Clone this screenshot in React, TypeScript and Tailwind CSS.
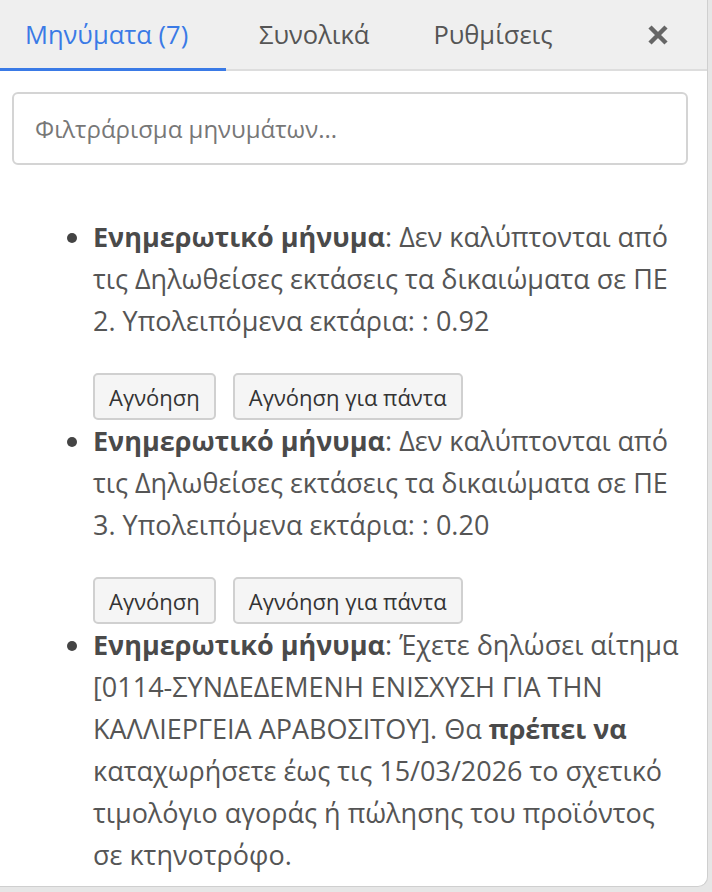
import React from 'react';

const font = { fontFamily: '"Open Sans", "Noto Sans", sans-serif' };

interface Message {
  id: number;
  body: React.ReactNode;
  actions: boolean;
}

const messages: Message[] = [
  {
    id: 1,
    actions: true,
    body: (
      <>
        <b className="font-bold text-[#4a4a4a]">Ενημερωτικό μήνυμα</b>: Δεν καλύπτονται από τις Δηλωθείσες εκτάσεις τα
        δικαιώματα σε ΠΕ 2. Υπολειπόμενα εκτάρια: : 0.92
      </>
    ),
  },
  {
    id: 2,
    actions: true,
    body: (
      <>
        <b className="font-bold text-[#4a4a4a]">Ενημερωτικό μήνυμα</b>: Δεν καλύπτονται από τις Δηλωθείσες εκτάσεις τα
        δικαιώματα σε ΠΕ 3. Υπολειπόμενα εκτάρια: : 0.20
      </>
    ),
  },
  {
    id: 3,
    actions: false,
    body: (
      <>
        <b className="font-bold text-[#4a4a4a]">Ενημερωτικό μήνυμα</b>: Έχετε δηλώσει αίτημα [0114-ΣΥΝΔΕΔΕΜΕΝΗ ΕΝΙΣΧΥΣΗ
        ΓΙΑ ΤΗΝ ΚΑΛΛΙΕΡΓΕΙΑ ΑΡΑΒΟΣΙΤΟΥ]. Θα <b className="font-bold text-[#4a4a4a]">πρέπει να</b> καταχωρήσετε έως
        τις 15/03/2026 το σχετικό τιμολόγιο αγοράς ή πώλησης του προϊόντος σε κτηνοτρόφο.
      </>
    ),
  },
];

export default function App() {
  return (
    <div className="w-[712px] h-[892px] bg-[#e6e6e6] overflow-hidden" style={font}>
      <div className="w-[708px] h-[887px] bg-white border-r border-b border-[#cfcfcf] rounded-br-[10px] overflow-hidden flex flex-col">
        {/* Tabs */}
        <div className="flex items-stretch h-[71px] bg-[#efefef] border-b-2 border-[#dddddd] text-[25.5px]">
          <div className="w-[226px] pl-[25px] flex items-center text-[#3a7ae6] border-b-[3px] border-[#3a7ae6] -mb-[2px]">
            Μηνύματα (7)
          </div>
          <div className="pl-[33px] pr-[32px] flex items-center text-[#555]">Συνολικά</div>
          <div className="pl-[32px] flex items-center text-[#555]">Ρυθμίσεις</div>
          <div className="flex-1 flex items-center justify-end pr-[38px]">
            <svg width="22" height="22" viewBox="0 0 22 22">
              <path d="M3 3 L19 19 M19 3 L3 19" stroke="#666" strokeWidth="4.5" />
            </svg>
          </div>
        </div>

        {/* Filter */}
        <div className="pl-[12px] pr-[19px] pt-[21px]">
          <input
            type="text"
            placeholder="Φιλτράρισμα μηνυμάτων..."
            className="w-full h-[73px] border-2 border-[#d4d4d4] rounded-[6px] px-[21px] text-[24px] text-[#555] placeholder:text-[#777] outline-none"
            style={font}
          />
        </div>

        {/* Messages */}
        <ul className="list-disc pl-[93px] pr-[17px] mt-[51px] text-[27px] leading-[42px] text-[#555] marker:text-[#444]">
          {messages.map((m) => (
            <li key={m.id}>
              <div>{m.body}</div>
              {m.actions && (
                <div className="flex gap-[17px] mt-[31px]">
                  <button className="h-[47px] px-[14px] bg-[#f5f5f5] border-2 border-[#d0d0d0] rounded-[5px] text-[22px] leading-none text-[#333]">
                    Αγνόηση
                  </button>
                  <button className="h-[47px] px-[14px] bg-[#f5f5f5] border-2 border-[#d0d0d0] rounded-[5px] text-[22px] leading-none text-[#333]">
                    Αγνόηση για πάντα
                  </button>
                </div>
              )}
            </li>
          ))}
        </ul>
      </div>
    </div>
  );
}
